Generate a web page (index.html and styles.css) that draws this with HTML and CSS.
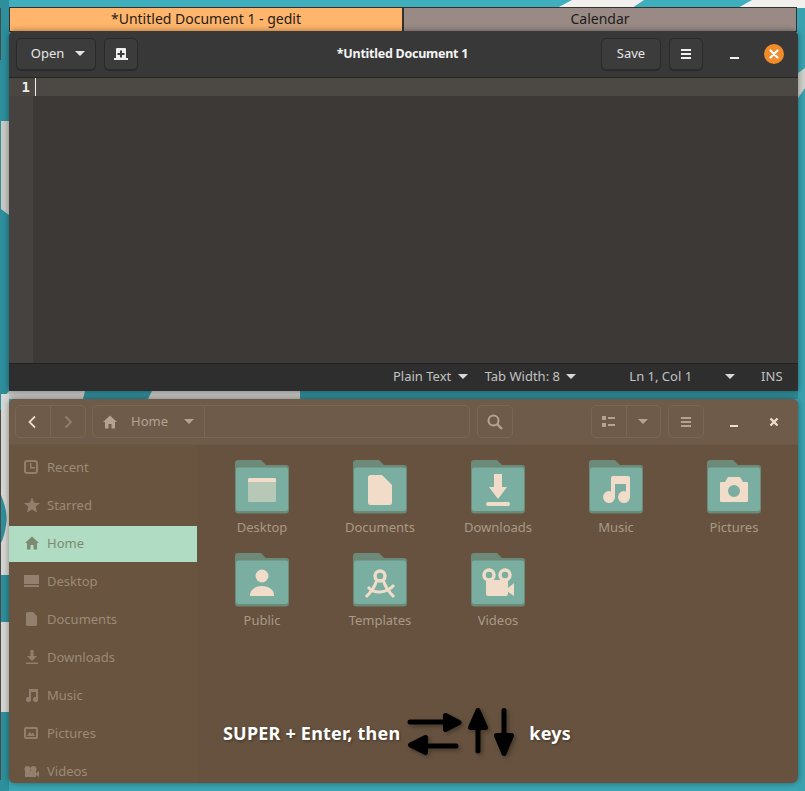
FILE: index.html
```html
<!DOCTYPE html>
<html lang="en">
<head>
    <meta charset="UTF-8" />
    <title>Desktop</title>
    <link rel="stylesheet" href="styles.css">
</head>
<body>

<svg class="wallpaper" viewBox="0 0 805 791" aria-hidden="true">
    <rect width="805" height="791" fill="#3aa5b3" />
    <rect width="805" height="8" fill="#3fafbe" />
    <rect width="9" height="791" fill="#2d8f9c" />
    <rect y="391" width="805" height="8" fill="#2f8c98" />
    <rect x="798" y="8" width="7" height="783" fill="#39a2ae" />
    <polygon points="557,8 572,0 644,0 632,8" fill="#f2f0ed" />
    <polygon points="738,8 752,0 805,0 805,8" fill="#f2f0ed" />
    <polygon points="798,73 805,68 805,88 798,98" fill="#cfcfcb" />
    <polygon points="1,121 9,121 9,215 1,209" fill="#c9c9c6" />
    <polygon points="2,399 9,391 85,391 83,399" fill="#c4c4c1" />
    <polygon points="148,399 152,391 300,391 300,399" fill="#c4c4c1" />
    <rect x="1" y="394" width="8" height="181" fill="#d6d6d3" />
    <path d="M1 495C5 505 8 515 6 525 5 533 3 539 1 543Z" fill="#2d8f9c" />
    <rect x="1" y="622" width="8" height="90" fill="#d6d6d3" />
    <rect y="410" width="1" height="370" fill="#4a4a48" />
    <rect y="8" width="1" height="52" fill="#4a4a48" />
</svg>

<svg class="defs" aria-hidden="true">
    <defs>
        <symbol id="i-home" viewBox="0 0 16 16"><path d="M8 1.500 1 8h2v6.500h3.500V10h3v4.500H13V8h2z" /></symbol>
        <symbol id="i-down" viewBox="0 0 16 16"><path d="M6.500 1h3v6H13l-5 5-5-5h3.500zM2 13.500h12V15H2z" /></symbol>
        <symbol id="i-doc" viewBox="0 0 16 16"><path d="M3.500 1H9l4 4v8.500a1.500 1.500 0 0 1-1.500 1.500h-8A1.500 1.500 0 0 1 2 13.500v-11A1.500 1.500 0 0 1 3.500 1z" /></symbol>
        <symbol id="i-music" viewBox="0 0 16 16"><path d="M5 2h9v10.500a2.500 2.500 0 1 1-2-2.400V5H7v7.500a2.500 2.500 0 1 1-2-2.400z" /></symbol>
        <symbol id="folder" viewBox="0 0 54 54">
            <path d="M3 0H26L31 5H51A3 3 0 0 1 54 8V50A3.500 3.500 0 0 1 50.500 53.500H3.500A3.500 3.500 0 0 1 0 50V3A3 3 0 0 1 3 0Z" fill="#6d8a78" />
            <rect x="1" y="7.500" width="52" height="43.500" rx="2.500" fill="#7aaea0" />
        </symbol>
    </defs>
</svg>

<div class="tabs">
    <div class="tab tab-active">*Untitled Document 1 - gedit</div>
    <div class="tab">Calendar</div>
</div>

<section class="window gedit">
    <header class="headerbar">
        <button class="btn btn-open"><span class="btn-label">Open</span> <span class="caret"></span></button>
        <button class="btn btn-icon">
            <svg width="16" height="16" viewBox="0 0 16 16"><path fill="#f0f0f0" fill-rule="evenodd" d="M4 2h8a1 1 0 0 1 1 1v9h2v2H1v-2h2V3a1 1 0 0 1 1-1zm3 2.500V7H4.500v2H7v2.500h2V9h2.500V7H9V4.500z" /></svg>
        </button>
        <div class="title">*Untitled Document 1</div>
        <button class="btn btn-save"><span class="btn-label">Save</span></button>
        <button class="btn btn-icon">
            <svg width="16" height="16" viewBox="0 0 16 16"><path fill="#f0f0f0" d="M3 3h10v2H3zM3 7h10v2H3zM3 11h10v2H3z" /></svg>
        </button>
        <div class="wm-min"></div>
        <div class="wm-close">
            <svg width="10" height="10" viewBox="0 0 10 10"><path d="M1.500 1.500l7 7M8.500 1.500l-7 7" stroke="#fff" stroke-width="2.200" stroke-linecap="round" /></svg>
        </div>
    </header>
    <div class="editor">
        <div class="gutter"><div class="line-no">1</div></div>
        <div class="text-area"><div class="line-current"><span class="cursor"></span></div></div>
    </div>
    <footer class="statusbar">
        <span class="status-item status-lang">Plain Text <span class="caret caret-small"></span></span>
        <span class="status-item status-tab">Tab Width: 8 <span class="caret caret-small"></span></span>
        <span class="status-item status-pos">Ln 1, Col 1</span>
        <span class="caret caret-small status-caret"></span>
        <span class="status-item status-ins">INS</span>
    </footer>
</section>

<section class="window files">
    <header class="files-header">
        <div class="group group-nav">
            <div class="seg seg-back"><svg width="16" height="16" viewBox="0 0 16 16"><path d="M10 2.500 4.500 8l5.500 5.500" fill="none" stroke="#ead6c2" stroke-width="1.800" /></svg></div>
            <div class="seg seg-fwd"><svg width="16" height="16" viewBox="0 0 16 16"><path d="M5.500 2.500 11 8l-5.500 5.500" fill="none" stroke="#937f6c" stroke-width="1.800" /></svg></div>
        </div>
        <div class="group group-path">
            <div class="path-home">
                <svg class="ic" width="16" height="16"><use href="#i-home" fill="#b5a391" /></svg>
                <span class="path-label">Home</span>
                <span class="caret caret-dim"></span>
            </div>
        </div>
        <div class="group group-search">
            <svg width="18" height="18" viewBox="0 0 18 18"><circle cx="7.500" cy="7.500" r="5" fill="none" stroke="#b5a391" stroke-width="2" /><path d="M11 11l5 5" stroke="#b5a391" stroke-width="2.400" /></svg>
        </div>
        <div class="group group-view">
            <div class="seg seg-list"><svg width="14" height="14" viewBox="0 0 14 14"><path fill="#b5a391" d="M0 1h4v4H0zM0 8h4v4H0zM6 2h7v2H6zM6 9h7v2H6z" /></svg></div>
            <div class="seg seg-drop"><span class="caret caret-dim"></span></div>
        </div>
        <div class="group group-menu">
            <svg width="16" height="16" viewBox="0 0 16 16"><path fill="#b5a391" d="M3 3h10v2H3zM3 7h10v2H3zM3 11h10v2H3z" /></svg>
        </div>
        <div class="wm-min wm-min-files"></div>
        <div class="wm-x">
            <svg width="12" height="12" viewBox="0 0 12 12"><path d="M2.500 2.500l7 7M9.500 2.500l-7 7" stroke="#f0dcc8" stroke-width="2.400" /></svg>
        </div>
    </header>

    <div class="files-body">
        <nav class="sidebar">
            <div class="side-row">
                <svg class="ic" width="16" height="16" viewBox="0 0 16 16"><path fill="#927f6d" fill-rule="evenodd" d="M3 1h8a3 3 0 0 1 3 3v8a3 3 0 0 1-3 3H3a3 3 0 0 1-3-3V4a3 3 0 0 1 3-3zm0 2a1 1 0 0 0-1 1v8a1 1 0 0 0 1 1h8a1 1 0 0 0 1-1V4a1 1 0 0 0-1-1zm3 1h1.500v4H11v1.500H6z" /></svg>
                <span>Recent</span>
            </div>
            <div class="side-row">
                <svg class="ic" width="16" height="16" viewBox="0 0 16 16"><path fill="#927f6d" d="M8 .5l2.200 5.200 5.800.4-4.400 3.700 1.400 5.700L8 12.400l-5 3.100 1.400-5.700L0 6.100l5.800-.4z" /></svg>
                <span>Starred</span>
            </div>
            <div class="side-row side-active">
                <svg class="ic" width="16" height="16"><use href="#i-home" fill="#7d8a72" /></svg>
                <span>Home</span>
            </div>
            <div class="side-row">
                <svg class="ic" width="16" height="16" viewBox="0 0 16 16"><path fill="#927f6d" d="M0 2h15v9H0zM0 12h15v2H0z" /></svg>
                <span>Desktop</span>
            </div>
            <div class="side-row">
                <svg class="ic" width="16" height="16"><use href="#i-doc" fill="#927f6d" /></svg>
                <span>Documents</span>
            </div>
            <div class="side-row">
                <svg class="ic" width="16" height="16"><use href="#i-down" fill="#927f6d" /></svg>
                <span>Downloads</span>
            </div>
            <div class="side-row">
                <svg class="ic" width="16" height="16"><use href="#i-music" fill="#927f6d" /></svg>
                <span>Music</span>
            </div>
            <div class="side-row">
                <svg class="ic" width="16" height="16" viewBox="0 0 16 16"><path fill="#927f6d" fill-rule="evenodd" d="M2 2h10a2 2 0 0 1 2 2v8a2 2 0 0 1-2 2H2a2 2 0 0 1-2-2V4a2 2 0 0 1 2-2zm0 2v8h10V4zm1 7 2.500-4 2 2 1.500-1.500 2 3.500z" /></svg>
                <span>Pictures</span>
            </div>
            <div class="side-row">
                <svg class="ic" width="16" height="16" viewBox="0 0 16 16">
                    <circle cx="3.500" cy="6" r="3" fill="#927f6d" />
                    <circle cx="9.500" cy="6" r="3" fill="#927f6d" />
                    <path fill="#927f6d" d="M1 8h11v6H1zM12 10l3-2v6l-3-2z" />
                </svg>
                <span>Videos</span>
            </div>
        </nav>

        <main class="grid">
            <div class="item">
                <svg class="folder" width="54" height="54" viewBox="0 0 54 54">
                    <use href="#folder" />
                    <rect x="13" y="18" width="28" height="24" rx="1.500" fill="#b7c9b6" />
                    <path d="M14.500 18h25a1.500 1.500 0 0 1 1.500 1.500V22H13v-2.500a1.500 1.500 0 0 1 1.500-1.500z" fill="#f0dcc8" />
                </svg>
                <span>Desktop</span>
            </div>
            <div class="item">
                <svg class="folder" width="54" height="54" viewBox="0 0 54 54">
                    <use href="#folder" />
                    <path d="M17.500 15H29l10 10v17.500a2.500 2.500 0 0 1-2.500 2.500h-19a2.500 2.500 0 0 1-2.500-2.500v-25a2.500 2.500 0 0 1 2.500-2.500z" fill="#f0dcc8" />
                </svg>
                <span>Documents</span>
            </div>
            <div class="item">
                <svg class="folder" width="54" height="54" viewBox="0 0 54 54">
                    <use href="#folder" />
                    <path d="M23 14h8v13h5l-9 12-9-12h5z" fill="#f0dcc8" />
                    <rect x="15" y="42" width="24" height="4" rx="2" fill="#f0dcc8" />
                </svg>
                <span>Downloads</span>
            </div>
            <div class="item">
                <svg class="folder" width="54" height="54" viewBox="0 0 54 54">
                    <use href="#folder" />
                    <path d="M24 16h15a2 2 0 0 1 2 2v19a6 6 0 1 1-4-5.600V24H26v13a6 6 0 1 1-4-5.600V18a2 2 0 0 1 2-2z" fill="#f0dcc8" />
                </svg>
                <span>Music</span>
            </div>
            <div class="item">
                <svg class="folder" width="54" height="54" viewBox="0 0 54 54">
                    <use href="#folder" />
                    <path fill-rule="evenodd" d="M21 17h12l3 5h4a1 1 0 0 1 1 1v18a1 1 0 0 1-1 1H14a1 1 0 0 1-1-1V23a1 1 0 0 1 1-1h4zm6 8a6 6 0 1 0 0 12 6 6 0 0 0 0-12z" fill="#f0dcc8" />
                </svg>
                <span>Pictures</span>
            </div>
            <div class="item">
                <svg class="folder" width="54" height="54" viewBox="0 0 54 54">
                    <use href="#folder" />
                    <circle cx="27" cy="23" r="6.500" fill="#f0dcc8" />
                    <path d="M15 43v-1c0-5 5-9 12-9s12 4 12 9v1z" fill="#f0dcc8" />
                </svg>
                <span>Public</span>
            </div>
            <div class="item">
                <svg class="folder" width="54" height="54" viewBox="0 0 54 54">
                    <use href="#folder" />
                    <circle cx="27" cy="23" r="5" fill="none" stroke="#f0dcc8" stroke-width="3.500" />
                    <path d="M23.500 28C22 33 19 38 13 44M30.500 28C32 33 35 38 41 44M15 34C21 41 33 41 41 32" fill="none" stroke="#f0dcc8" stroke-width="3" />
                </svg>
                <span>Templates</span>
            </div>
            <div class="item">
                <svg class="folder" width="54" height="54" viewBox="0 0 54 54">
                    <use href="#folder" />
                    <circle cx="18" cy="22" r="5" fill="none" stroke="#f0dcc8" stroke-width="3.500" />
                    <circle cx="34" cy="22" r="5" fill="none" stroke="#f0dcc8" stroke-width="3.500" />
                    <rect x="15" y="27" width="22" height="16" rx="2" fill="#f0dcc8" />
                    <path d="M37 35l6-5v13l-6-4z" fill="#f0dcc8" />
                </svg>
                <span>Videos</span>
            </div>
        </main>
    </div>

    <div class="hint">
        <span class="hint-text">SUPER + Enter, then</span>
        <svg class="hint-arrows" width="108" height="52" viewBox="0 0 108 52">
            <g fill="none" stroke="#000" stroke-width="5" stroke-linecap="round" stroke-linejoin="round">
                <path d="M3 15H42" />
                <path d="M38.500 8.500 52 15.500 38.500 22.500Z" fill="#000" />
                <path d="M49 39H12" />
                <path d="M18.500 30.500 3.500 38 18.500 45.500Z" fill="#000" />
                <path d="M71 44V12" />
                <path d="M71 3.500 63.500 20.500H78.500Z" fill="#000" />
                <path d="M97 3.500V36" />
                <path d="M89.500 28.500H104.500L97 46.500Z" fill="#000" />
            </g>
        </svg>
        <span class="hint-text hint-keys">keys</span>
    </div>
</section>

</body>
</html>
```

FILE: styles.css
```css
* {
    box-sizing: border-box;
}
html, body {
    height: 100%;
}
body {
    margin: 0;
    overflow: hidden;
    position: relative;
    font-family: "Noto Sans", sans-serif;
    font-size: 13px;
}
.wallpaper {
    position: absolute;
    left: 0;
    top: 0;
    width: 805px;
    height: 791px;
}
.defs {
    position: absolute;
    width: 0;
    height: 0;
}
button {
    font-family: inherit;
    font-size: inherit;
}

/* top tab strip */
.tabs {
    position: absolute;
    left: 9px;
    top: 7px;
    width: 788px;
    height: 25px;
    display: flex;
    border: 1px solid #33302f;
}
.tab {
    flex: 1;
    background: #998a85;
    color: #1f1c1a;
    text-align: center;
    line-height: 22px;
    font-size: 14px;
}
.tab-active {
    background: #ffb56b;
    border-right: 2px solid #33302f;
}

/* windows */
.window {
    position: absolute;
    left: 9px;
    width: 789px;
    overflow: hidden;
    box-shadow: 0 0 6px rgba(0, 0, 0, 0.4);
}
.gedit {
    top: 31px;
    height: 360px;
    display: flex;
    flex-direction: column;
    background: #3d3936;
    border-radius: 6px 6px 0 0;
}
.files {
    top: 399px;
    height: 384px;
    background: #66523f;
    border-radius: 6px;
}

/* gedit header */
.headerbar {
    height: 47px;
    flex: none;
    display: flex;
    align-items: center;
    padding: 0 7px;
    background: #383838;
    border-bottom: 1px solid #252525;
    color: #eee;
}
.btn {
    height: 32px;
    background: #3c3c3c;
    border: 1px solid #2a2a2a;
    border-radius: 5px;
    color: #e6e6e6;
    display: flex;
    align-items: center;
    justify-content: center;
    padding: 0;
    box-shadow: 0 1px 0 #2b2b2b;
}
.btn-label {
    margin-bottom: 2px;
}
.btn-open {
    width: 80px;
    gap: 11px;
    margin-right: 8px;
    padding-left: 4px;
}
.btn-open .caret {
    margin-bottom: 2px;
}
.btn-icon {
    width: 34px;
}
.btn-save {
    width: 60px;
    margin-right: 8px;
}
.title {
    flex: 1;
    text-align: center;
    font-weight: 700;
    font-size: 12.500px;
    letter-spacing: -0.25px;
    color: #f4f4f4;
    padding-left: 66px;
    margin-bottom: 2px;
}
.caret {
    display: inline-block;
    width: 0;
    height: 0;
    border-left: 5px solid transparent;
    border-right: 5px solid transparent;
    border-top: 5px solid #e6e6e6;
}
.caret-small {
    border-left-width: 5.500px;
    border-right-width: 5.500px;
    border-top-color: #d8d8d8;
    margin-left: 3px;
    vertical-align: 2px;
}
.caret-dim {
    border-top-color: #b5a391;
}
.wm-min {
    width: 9px;
    height: 2px;
    background: #f0f0f0;
    margin: 8px 0 0 27px;
}
.wm-close {
    width: 20px;
    height: 20px;
    margin-left: 25px;
    margin-right: 7px;
    border-radius: 50%;
    background: #f28b2a;
    display: flex;
    align-items: center;
    justify-content: center;
}

/* editor */
.editor {
    flex: 1;
    display: flex;
}
.gutter {
    width: 24px;
    background: #464240;
}
.line-no {
    height: 18px;
    background: #4a4642;
    color: #eee;
    font: 700 14px/18px "DejaVu Sans Mono", monospace;
    text-align: right;
    padding-right: 3px;
}
.text-area {
    flex: 1;
}
.line-current {
    height: 18px;
    background: #4c4844;
    padding-left: 2px;
}
.cursor {
    display: block;
    width: 1px;
    height: 18px;
    background: #eee;
}
.statusbar {
    height: 28px;
    flex: none;
    display: flex;
    align-items: center;
    padding-bottom: 3px;
    background: #2e2e2e;
    border-top: 1px solid #222;
    color: #c2c2c2;
}
.status-lang {
    margin-left: 384px;
}
.status-tab {
    margin-left: 17px;
}
.status-pos {
    margin-left: 53px;
}
.status-caret {
    margin-left: 33px;
}
.status-ins {
    margin-left: 26px;
}

/* files header */
.files-header {
    height: 46px;
    display: flex;
    align-items: center;
    padding: 0 6px;
    background: #6f5b49;
    border-bottom: 1px solid #6a5643;
}
.group {
    height: 33px;
    flex: none;
    display: flex;
    border: 1px solid #7a6653;
    border-radius: 5px;
    align-items: center;
    justify-content: center;
}
.seg {
    height: 100%;
    display: flex;
    align-items: center;
    justify-content: center;
}
.group-nav {
    width: 71px;
    margin-right: 6px;
}
.seg-back,
.seg-list {
    width: 35px;
    border-right: 1px solid #7a6653;
}
.seg-fwd,
.seg-drop {
    width: 34px;
}
.group-path {
    width: 378px;
    justify-content: flex-start;
    margin-right: 7px;
}
.path-home {
    width: 112px;
    height: 100%;
    display: flex;
    align-items: center;
    padding-left: 9px;
    border-right: 1px solid #7a6653;
}
.path-label {
    margin-left: 13px;
    margin-right: 16px;
    margin-bottom: 2px;
    color: #b5a391;
}
.group-search {
    width: 36px;
    margin-right: 78px;
}
.group-view {
    width: 70px;
    margin-right: 7px;
}
.group-menu {
    width: 36px;
}
.wm-min-files {
    background: #f0dcc8;
    width: 8px;
    margin-left: 26px;
}
.wm-x {
    width: 12px;
    height: 12px;
    margin-left: 30px;
    line-height: 0;
}

/* files body */
.files-body {
    display: flex;
    height: 338px;
}
.sidebar {
    width: 188px;
    flex: none;
    padding-top: 5px;
    display: flex;
    flex-direction: column;
    gap: 2px;
    background: #68543f;
}
.side-row {
    height: 36px;
    flex: none;
    display: flex;
    align-items: center;
    padding-left: 15px;
    padding-bottom: 2px;
    gap: 7px;
    color: #9d8a78;
}
.ic {
    flex: none;
}
.side-active {
    background: #b0dcc3;
    color: #7d8a72;
}
.grid {
    flex: 1;
    display: grid;
    grid-template-columns: repeat(5, 118px);
    grid-auto-rows: 93px;
    padding: 15px 0 0 6px;
}
.item {
    display: flex;
    flex-direction: column;
    align-items: center;
    color: #ab9987;
}
.folder {
    display: block;
    margin-bottom: 4px;
}
.item span {
    line-height: 18px;
}

/* key hint laid over the folder area */
.hint {
    position: absolute;
    left: 214px;
    top: 308px;
    display: flex;
    align-items: center;
    color: #fff;
    font-size: 18px;
    font-weight: 700;
    letter-spacing: 0.2px;
    text-shadow: 1px 1px 3px rgba(0, 0, 0, 0.4);
}
.hint-arrows {
    margin-left: 7px;
    filter: drop-shadow(2px 2px 2px rgba(0, 0, 0, 0.3));
}
.hint-keys {
    margin-left: 14px;
}
```
